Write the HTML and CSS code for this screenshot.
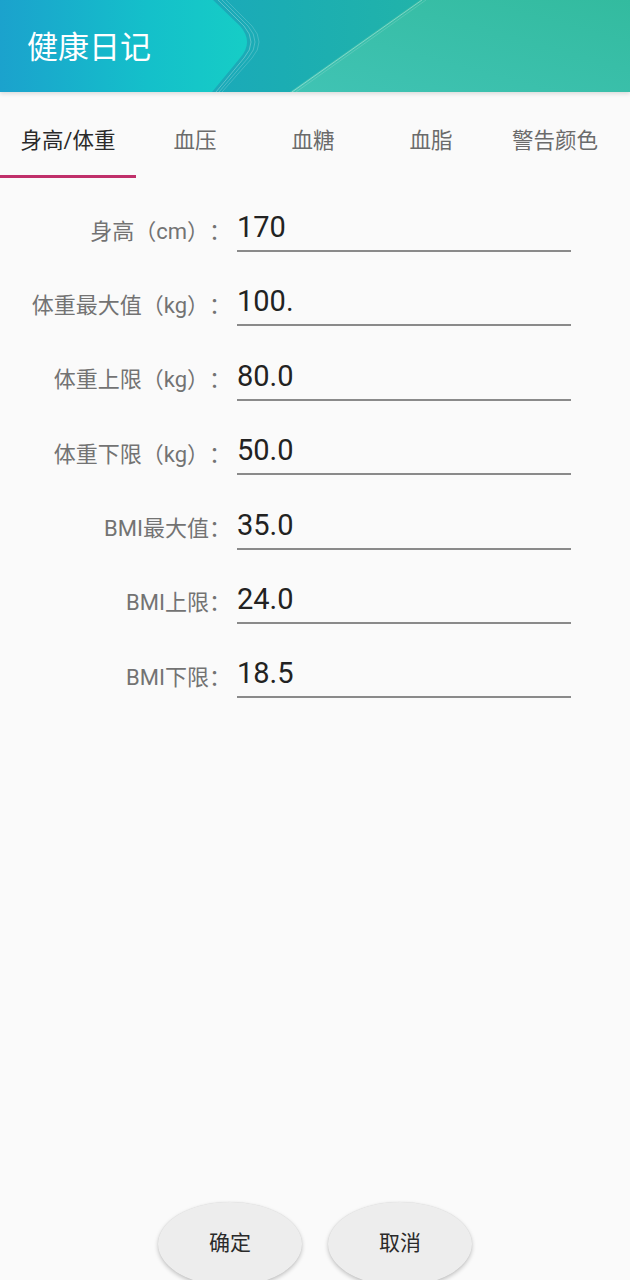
FILE: index.html
```html
<!DOCTYPE html>
<html lang="zh-CN">
<head>
<meta charset="utf-8">
<title>健康日记</title>
<link rel="stylesheet" href="styles.css">
</head>
<body>
<div class="page">
  <header class="appbar">
    <svg class="appbar-bg" width="630" height="92" viewBox="0 0 630 92" preserveAspectRatio="none" aria-hidden="true">
      <defs>
        <linearGradient id="base" x1="0" y1="0" x2="1" y2="0">
          <stop offset="0" stop-color="#1a9fcc"/>
          <stop offset="0.45" stop-color="#1badb3"/>
          <stop offset="0.7" stop-color="#22b4a8"/>
          <stop offset="1" stop-color="#2fb99d"/>
        </linearGradient>
        <linearGradient id="left" x1="0" y1="0" x2="1" y2="0">
          <stop offset="0" stop-color="#1ba2cd"/>
          <stop offset="0.6" stop-color="#14c0ca"/>
          <stop offset="1" stop-color="#16cdc6"/>
        </linearGradient>
        <linearGradient id="right" x1="0" y1="1" x2="1" y2="0">
          <stop offset="0" stop-color="#40c3b4"/>
          <stop offset="1" stop-color="#33bb9f"/>
        </linearGradient>
      </defs>
      <rect width="630" height="92" fill="url(#base)"/>
      <path d="M290 92 L420 0 L630 0 L630 92 Z" fill="url(#right)"/>
      <path d="M292 92 L422 0" stroke="#ffffff" stroke-opacity="0.35" stroke-width="1" fill="none"/>
      <path d="M296 92 L426 0" stroke="#ffffff" stroke-opacity="0.15" stroke-width="1" fill="none"/>
      <path d="M226 0 L252 26 Q266 42 252 58 L222 92" stroke="#ffffff" stroke-opacity="0.18" stroke-width="1" fill="none"/>
      <path d="M222 0 L248 26 Q262 42 248 58 L219 92" stroke="#ffffff" stroke-opacity="0.22" stroke-width="1" fill="none"/>
      <path d="M218 0 L244 26 Q258 42 244 58 L216 92" stroke="#ffffff" stroke-opacity="0.28" stroke-width="1" fill="none"/>
      <path d="M0 0 L213 0 L240 26 Q254 42 240 58 L212 92 L0 92 Z" fill="url(#left)"/>
    </svg>
    <h1 class="title">健康日记</h1>
  </header>

  <nav class="tabs">
    <div class="tab active">身高/体重</div>
    <div class="tab">血压</div>
    <div class="tab">血糖</div>
    <div class="tab">血脂</div>
    <div class="tab tab-last">警告颜色</div>
  </nav>

  <main class="form">
    <div class="row"><div class="label">身高（cm）：</div><div class="value">170</div></div>
    <div class="row"><div class="label">体重最大值（kg）：</div><div class="value">100.</div></div>
    <div class="row"><div class="label">体重上限（kg）：</div><div class="value">80.0</div></div>
    <div class="row"><div class="label">体重下限（kg）：</div><div class="value">50.0</div></div>
    <div class="row"><div class="label">BMI最大值：</div><div class="value">35.0</div></div>
    <div class="row"><div class="label">BMI上限：</div><div class="value">24.0</div></div>
    <div class="row"><div class="label">BMI下限：</div><div class="value">18.5</div></div>
  </main>

  <footer class="actions">
    <button class="btn" type="button">确定</button>
    <button class="btn" type="button">取消</button>
  </footer>
</div>
</body>
</html>
```

FILE: styles.css
```css
* { box-sizing: border-box; }

html, body {
  margin: 0;
  padding: 0;
  background: #fafafa;
}

body {
  font-family: Roboto, "Noto Sans CJK SC", sans-serif;
}

.page {
  width: 630px;
  height: 1280px;
  overflow: hidden;
  display: flex;
  flex-direction: column;
  background: #fafafa;
}

.appbar {
  position: relative;
  height: 92px;
  flex: none;
  display: flex;
  align-items: center;
  padding-left: 27px;
  box-shadow: 0 2px 4px rgba(0, 0, 0, 0.12);
  z-index: 1;
}

.appbar-bg {
  position: absolute;
  left: 0;
  top: 0;
  width: 100%;
  height: 100%;
}

.title {
  position: relative;
  margin: 0;
  font-size: 31px;
  font-weight: 400;
  color: #ffffff;
  line-height: 1;
  padding-top: 2px;
}

.tabs {
  height: 86px;
  flex: none;
  display: flex;
}

.tab {
  width: 118px;
  display: flex;
  align-items: center;
  justify-content: center;
  padding-top: 10px;
  font-size: 21.5px;
  color: #6b6b6b;
  border-bottom: 3px solid transparent;
}

.tab.active {
  width: 136px;
  color: #2a2a2a;
  border-bottom-color: #c0306a;
}

.tab.tab-last {
  width: 130px;
}

.form {
  flex: 1;
  display: flex;
  flex-direction: column;
  gap: 26.4px;
  padding-top: 26px;
}

.row {
  display: flex;
  align-items: center;
  height: 48px;
}

.label {
  width: 231px;
  text-align: right;
  font-size: 22px;
  color: #737373;
  padding-top: 1px;
  white-space: nowrap;
  text-spacing-trim: space-all;
}

.value {
  margin-left: 6px;
  width: 334px;
  height: 48px;
  line-height: 46px;
  font-size: 29px;
  color: #222222;
  border-bottom: 2px solid #8a8a8a;
}

.actions {
  flex: none;
  height: 78px;
  display: flex;
  justify-content: center;
  align-items: flex-start;
  gap: 26px;
}

.btn {
  width: 144px;
  height: 84px;
  flex: none;
  border: none;
  border-radius: 72px / 42px;
  background: #ededed;
  box-shadow: 0 2px 4px rgba(0, 0, 0, 0.22), 0 0 1px rgba(0, 0, 0, 0.12);
  font-family: Roboto, "Noto Sans CJK SC", sans-serif;
  font-size: 21px;
  color: #2a2a2a;
  padding: 0 0 6px;
}
```
